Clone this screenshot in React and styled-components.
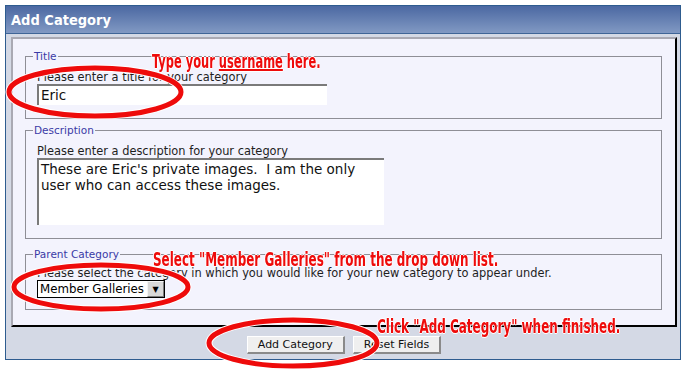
import React from "react";
import styled, { createGlobalStyle } from "styled-components";

const Global = createGlobalStyle`
  html, body { margin: 0; padding: 0; background: #ffffff; }
  body { font-family: "DejaVu Sans", Verdana, sans-serif; }
`;

const Page = styled.div`
  position: relative;
  width: 685px;
  height: 388px;
  padding: 5px 0 0 5px;
  box-sizing: border-box;
`;

const Frame = styled.div`
  width: 676px;
  border: 1px solid #2e5c8f;
  box-sizing: border-box;
  background: #d4d9e5;
`;

const Header = styled.div`
  height: 27px;
  border-bottom: 1px solid #3f6597;
  background: linear-gradient(#4b68a2, #8199c3);
  display: flex;
  align-items: center;
  padding-left: 5px;
  color: #ffffff;
  font-family: "DejaVu Sans Condensed", "DejaVu Sans", sans-serif;
  font-weight: bold;
  font-size: 14.5px;
`;

const Body = styled.div`
  padding: 3px 3px 5px 5px;
`;

const Panel = styled.div`
  background: #f3f3fd;
  border-style: solid;
  border-width: 2px;
  border-color: #a9a9b3 #000000 #000000 #a9a9b3;
  padding: 11px 13px 15px 12px;
  display: flex;
  flex-direction: column;
`;

const Fieldset = styled.fieldset`
  margin: ${(p) => p.$top}px 0 0 0;
  border: 1px solid #8e8e96;
  padding: 0 11px ${(p) => p.$bottom}px 11px;
  min-width: 0;
`;

const Legend = styled.legend`
  color: #3a3aa6;
  font-size: 10.5px;
  line-height: 13px;
  padding: 0 1px;
  margin-left: -4px;
`;

const Prompt = styled.div`
  color: #1e1e1e;
  font-size: 11.4px;
  line-height: 13px;
  margin-top: ${(p) => p.$top}px;
  white-space: nowrap;
`;

const TextBox = styled.div`
  width: ${(p) => p.$w}px;
  height: ${(p) => p.$h}px;
  box-sizing: border-box;
  background: #ffffff;
  border-style: solid;
  border-width: 2px 0 0 2px;
  border-color: #7a7a7a;
  padding: 1px 2px;
  font-size: 13.5px;
  line-height: 16px;
  color: #111;
  white-space: pre-wrap;
`;

const SelectBox = styled.div`
  display: inline-flex;
  align-items: stretch;
  height: 18px;
  box-sizing: border-box;
  border: 1px solid #000;
  background: #fff;
  font-size: 11.8px;
`;

const SelectText = styled.span`
  padding: 0 3px 0 2px;
  display: flex;
  align-items: center;
  color: #000;
`;

const SelectArrow = styled.span`
  width: 15px;
  background: #d8d8d8;
  border-style: solid;
  border-width: 1px;
  border-color: #f4f4f4 #7a7a7a #7a7a7a #f4f4f4;
  display: flex;
  align-items: center;
  justify-content: center;
  font-size: 8px;
  color: #000;
`;

const Row = styled.div`
  display: flex;
`;

const ButtonRow = styled.div`
  display: flex;
  justify-content: center;
  gap: 8px;
  padding-top: 9px;
`;

const Button = styled.div`
  height: 18px;
  box-sizing: border-box;
  padding: 0 10px;
  display: flex;
  align-items: center;
  background: #efefef;
  border-style: solid;
  border-width: 1px 2px 2px 1px;
  border-color: #ffffff #8a8a8a #8a8a8a #ffffff;
  font-size: 11px;
  color: #111;
`;

const Note = styled.div`
  position: absolute;
  left: ${(p) => p.$x}px;
  top: ${(p) => p.$y}px;
  white-space: nowrap;
  font-family: "Liberation Sans Narrow", "DejaVu Sans Condensed", sans-serif;
  font-weight: bold;
  font-size: 19px;
  color: #ee0b0b;
  transform: scaleX(${(p) => p.$sx});
  transform-origin: left top;
  line-height: 20px;
  text-shadow: 1px 0 0 #fff, -1px 0 0 #fff, 0 1px 0 #fff, 0 -1px 0 #fff;
`;

const Under = styled.span`
  text-decoration: underline;
  text-decoration-thickness: 2px;
  text-underline-offset: 1px;
`;

const Overlay = styled.svg`
  position: absolute;
  left: 0;
  top: 0;
  pointer-events: none;
`;

const ellipses = [
  { cx: 95, cy: 92, rx: 86, ry: 24 },
  { cx: 101, cy: 287, rx: 87, ry: 22 },
  { cx: 293, cy: 343, rx: 84, ry: 23 },
];

export default function App() {
  return (
    <>
      <Global />
      <Page>
        <Frame>
          <Header>Add Category</Header>
          <Body>
            <Panel>
              <Fieldset $top={0} $bottom={13}>
                <Legend>Title</Legend>
                <Prompt $top={8}>Please enter a title for your category</Prompt>
                <TextBox $w={290} $h={21}>Eric</TextBox>
              </Fieldset>
              <Fieldset $top={5} $bottom={13}>
                <Legend>Description</Legend>
                <Prompt $top={8}>Please enter a description for your category</Prompt>
                <TextBox $w={347} $h={67}>
                  {"These are Eric's private images.  I am the only user who can access these images."}
                </TextBox>
              </Fieldset>
              <Fieldset $top={9} $bottom={11}>
                <Legend>Parent Category</Legend>
                <Prompt $top={6}>
                  Please select the category in which you would like for your new category to appear under.
                </Prompt>
                <Row>
                  <SelectBox>
                    <SelectText>Member Galleries</SelectText>
                    <SelectArrow>▼</SelectArrow>
                  </SelectBox>
                </Row>
              </Fieldset>
            </Panel>
            <ButtonRow>
              <Button>Add Category</Button>
              <Button>Reset Fields</Button>
            </ButtonRow>
          </Body>
        </Frame>
        <Overlay width="685" height="388" viewBox="0 0 685 388">
          {ellipses.map((e, i) => (
            <g key={i}>
              <ellipse cx={e.cx} cy={e.cy} rx={e.rx} ry={e.ry} fill="none" stroke="#fff" strokeWidth="7" />
              <ellipse cx={e.cx} cy={e.cy} rx={e.rx} ry={e.ry} fill="none" stroke="#ee0b0b" strokeWidth="5" />
            </g>
          ))}
        </Overlay>
        <Note $x={152} $y={51} $sx={0.67}>
          Type your <Under>username</Under> here.
        </Note>
        <Note $x={153} $y={249} $sx={0.7}>Select "Member Galleries" from the drop down list.</Note>
        <Note $x={377} $y={316} $sx={0.7}>Click "Add Category" when finished.</Note>
      </Page>
    </>
  );
}
